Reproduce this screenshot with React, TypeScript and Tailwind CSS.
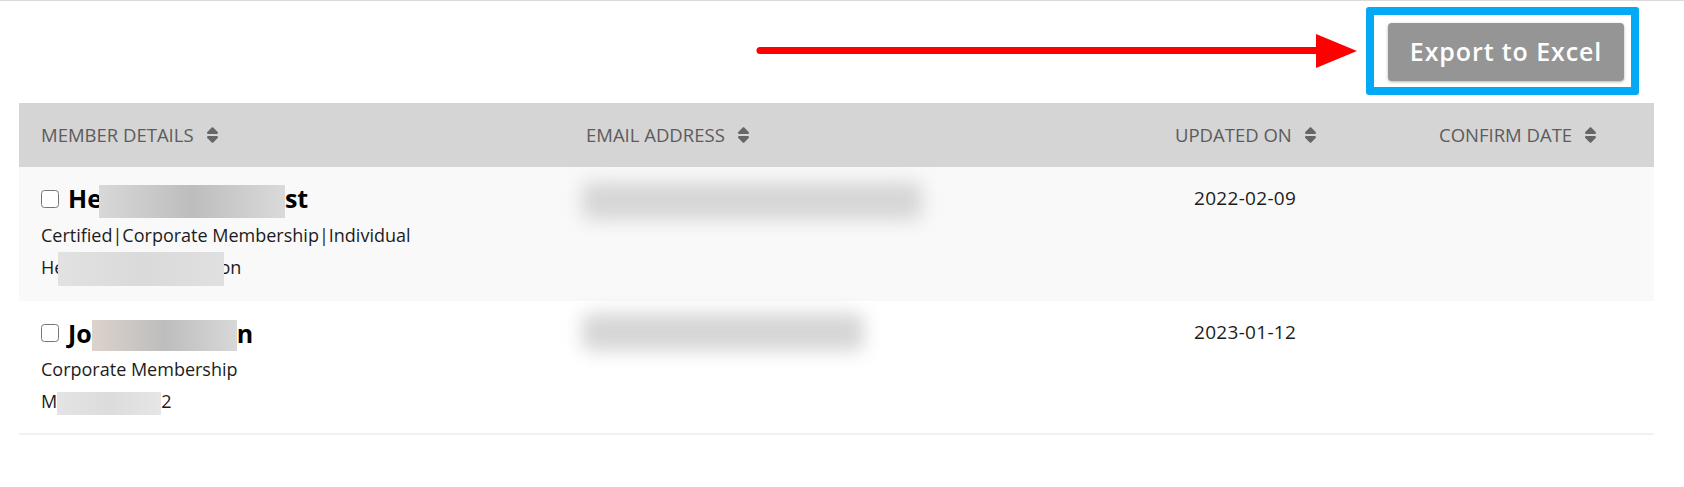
import * as React from "react";

interface Member {
  id: number;
  first: string;
  last: string;
  nameBox: { w: number; h: number; cls: string };
  tags: string[];
  subA: string;
  subB: string;
  subBox: { w: number; h: number; cls: string };
  email: { w: number; mt: number };
  updated: string;
  confirmed: string;
}

const members: Member[] = [
  {
    id: 1,
    first: "He",
    last: "st",
    nameBox: { w: 186, h: 33, cls: "-ml-[3px] bg-linear-to-r from-[#d8d8d8] via-[#bdbdbd] to-[#dadada]" },
    tags: ["Certified", "Corporate Membership", "Individual"],
    subA: "He",
    subB: "on",
    subBox: { w: 166, h: 34, cls: "-ml-[6px] -mr-[5px] bg-linear-to-r from-[#e2e2e2] via-[#dadada] to-[#e0e0e0]" },
    email: { w: 340, mt: 15 },
    updated: "2022-02-09",
    confirmed: "",
  },
  {
    id: 2,
    first: "Jo",
    last: "n",
    nameBox: { w: 145, h: 31, cls: "bg-linear-to-r from-[#dcd3cb] via-[#bdbdbd] to-[#d8d8d8]" },
    tags: ["Corporate Membership"],
    subA: "M",
    subB: "2",
    subBox: { w: 104, h: 23, cls: "bg-linear-to-r from-[#e4e4e4] via-[#dcdcdc] to-[#e6e6e6]" },
    email: { w: 282, mt: 12 },
    updated: "2023-01-12",
    confirmed: "",
  },
];

function SortIcon() {
  return (
    <svg viewBox="0 0 320 512" className="h-[18px] w-[11px] fill-[#666]">
      <path d="M137.4 41.4c12.5-12.5 32.8-12.5 45.3 0l128 128c9.2 9.2 11.9 22.9 6.9 34.9s-16.6 19.8-29.6 19.8H32c-12.9 0-24.6-7.8-29.6-19.8s-2.2-25.7 6.9-34.9l128-128zm0 429.3l-128-128c-9.2-9.2-11.9-22.9-6.9-34.9s16.6-19.8 29.6-19.8H288c12.9 0 24.6 7.8 29.6 19.8s2.2 25.7-6.9 34.9l-128 128c-12.5 12.5-32.8 12.5-45.3 0z" />
    </svg>
  );
}

function HeaderCell({ label, className }: { label: string; className?: string }) {
  return (
    <div className={"flex items-center gap-[13px] " + (className ?? "")}>
      <span className="text-[18.5px] uppercase text-[#5c5c5c]">{label}</span>
      <SortIcon />
    </div>
  );
}

function MemberRow({ m, striped, last }: { m: Member; striped: boolean; last: boolean }) {
  return (
    <div
      className={
        "grid grid-cols-[547px_589px_264px_1fr] " +
        (striped ? "bg-[#f9f9f9] " : "bg-white ") +
        (last ? "border-b-2 border-[#f1f1f1]" : "")
      }
    >
      <div className={"pl-[22px] pt-[14px] " + (last ? "pb-[16px]" : "pb-[18px]")}>
        <div className="flex h-[36px] items-center gap-[9px]">
          <span className="h-[18px] w-[18px] shrink-0 rounded-[3.5px] border-[1.5px] border-[#767676] bg-white" />
          <div className="text-[25px] font-bold leading-[36px] text-black">
            {m.first}
            <span className={"inline-block align-middle " + m.nameBox.cls} style={{ width: m.nameBox.w, height: m.nameBox.h }} />
            {m.last}
          </div>
        </div>
        <div className="mt-[2px] h-[32px] text-[18px] leading-[32px] text-[#1c1c1c]">
          {m.tags.join("|")}
        </div>
        <div className="h-[32px] text-[18px] leading-[32px] text-[#1c1c1c]">
          {m.subA}
          <span className={"relative inline-block align-middle " + m.subBox.cls} style={{ width: m.subBox.w, height: m.subBox.h }} />
          {m.subB}
        </div>
      </div>
      <div className="pl-[16px]">
        <div
          className="h-[38px] rounded-[8px] bg-[#d6d6d6] blur-[9px]"
          style={{ width: m.email.w, marginTop: m.email.mt }}
        />
      </div>
      <div className="pl-[39px] pt-[17px] text-[19px] tracking-[0.3px] leading-[28px] text-[#1c1c1c]">{m.updated}</div>
      <div className="pl-[20px] pt-[17px] text-[19px] leading-[28px] text-[#1c1c1c]">{m.confirmed}</div>
    </div>
  );
}

export default function App() {
  return (
    <div className="min-h-[487px] w-full bg-white font-['Open_Sans',sans-serif]">
      <div className="relative border-t border-[#dadada] pt-[6px]">
        <div className="flex justify-end pr-[45px]">
          <div className="rounded-[3px] border-8 border-[#03a9f4] pt-[8px] pr-[7px] pb-[6px] pl-[14px]">
            <button className="flex h-[58px] w-[236px] items-center justify-center rounded-[4px] bg-[#959595] text-[25px] font-semibold tracking-[0.9px] text-white shadow-[0_1px_3px_rgba(0,0,0,0.3)]">
              Export to Excel
            </button>
          </div>
        </div>
        <svg className="absolute left-[755px] top-[28px]" width="610" height="45" viewBox="0 0 610 45">
          <line x1="5" y1="21.5" x2="564" y2="21.5" stroke="#ff0000" strokeWidth="7" strokeLinecap="round" />
          <polygon points="561,5 602,22 561,39" fill="#ff0000" />
        </svg>
      </div>

      <div className="mt-[8px] ml-[19px] mr-[30px]">
        <div className="grid h-[64px] grid-cols-[547px_589px_264px_1fr] items-center bg-[#d5d5d5]">
          <HeaderCell label="Member Details" className="pl-[22px]" />
          <HeaderCell label="Email Address" className="pl-[20px]" />
          <HeaderCell label="Updated On" className="pl-[20px]" />
          <HeaderCell label="Confirm Date" className="pl-[20px]" />
        </div>
        {members.map((m, i) => (
          <MemberRow key={m.id} m={m} striped={i % 2 === 0} last={i === members.length - 1} />
        ))}
      </div>
    </div>
  );
}
